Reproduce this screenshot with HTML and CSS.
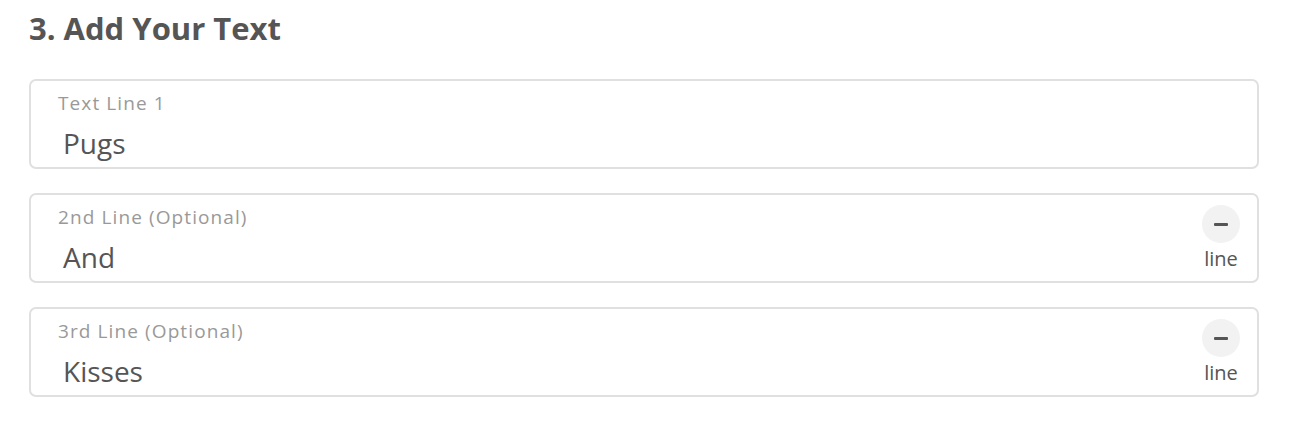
FILE: index.html
```html
<!DOCTYPE html>
<html>
<head>
<meta charset="utf-8">
<link rel="stylesheet" href="styles.css">
</head>
<body>
<section class="panel">
  <h2 class="title">3. Add Your Text</h2>
  <div class="fields">
    <div class="field">
      <div class="field-main">
        <div class="label">Text Line 1</div>
        <div class="value">Pugs</div>
      </div>
    </div>
    <div class="field">
      <div class="field-main">
        <div class="label">2nd Line (Optional)</div>
        <div class="value">And</div>
      </div>
      <div class="remove">
        <span class="circle"><span class="minus"></span></span>
        <span class="remove-text">line</span>
      </div>
    </div>
    <div class="field">
      <div class="field-main">
        <div class="label">3rd Line (Optional)</div>
        <div class="value">Kisses</div>
      </div>
      <div class="remove">
        <span class="circle"><span class="minus"></span></span>
        <span class="remove-text">line</span>
      </div>
    </div>
  </div>
</section>
</body>
</html>
```
FILE: styles.css
```css
* { box-sizing: border-box; }
html, body { margin: 0; padding: 0; background: #fff; }
body { font-family: "Open Sans", "Noto Sans", sans-serif; color: #555; }
.panel { padding: 8px 31px 0 29px; width: 1290px; }
.title { margin: 0 0 31px 0; font-size: 31px; font-weight: 700; color: #555; line-height: 40px; }
.fields { display: flex; flex-direction: column; gap: 24px; }
.field {
  display: flex; align-items: stretch;
  border: 2px solid #e0e0e0; border-radius: 7px;
  height: 90px; padding: 10px 18px 0 27px;
}
.field-main { flex: 1; display: flex; flex-direction: column; }
.label { font-size: 19px; letter-spacing: 1.1px; color: #999; line-height: 24px; }
.value { font-size: 28px; color: #555; line-height: 38px; padding-left: 5px; margin-top: 9px; }
.remove { display: flex; flex-direction: column; align-items: center; padding-top: 0; margin-right: -1px; }
.circle { width: 38px; height: 38px; border-radius: 50%; background: #f2f2f2; display: flex; align-items: center; justify-content: center; }
.minus { width: 14px; height: 3px; background: #555; border-radius: 1px; }
.remove-text { font-size: 20px; line-height: 28px; color: #555; margin-top: 2px; }
```
